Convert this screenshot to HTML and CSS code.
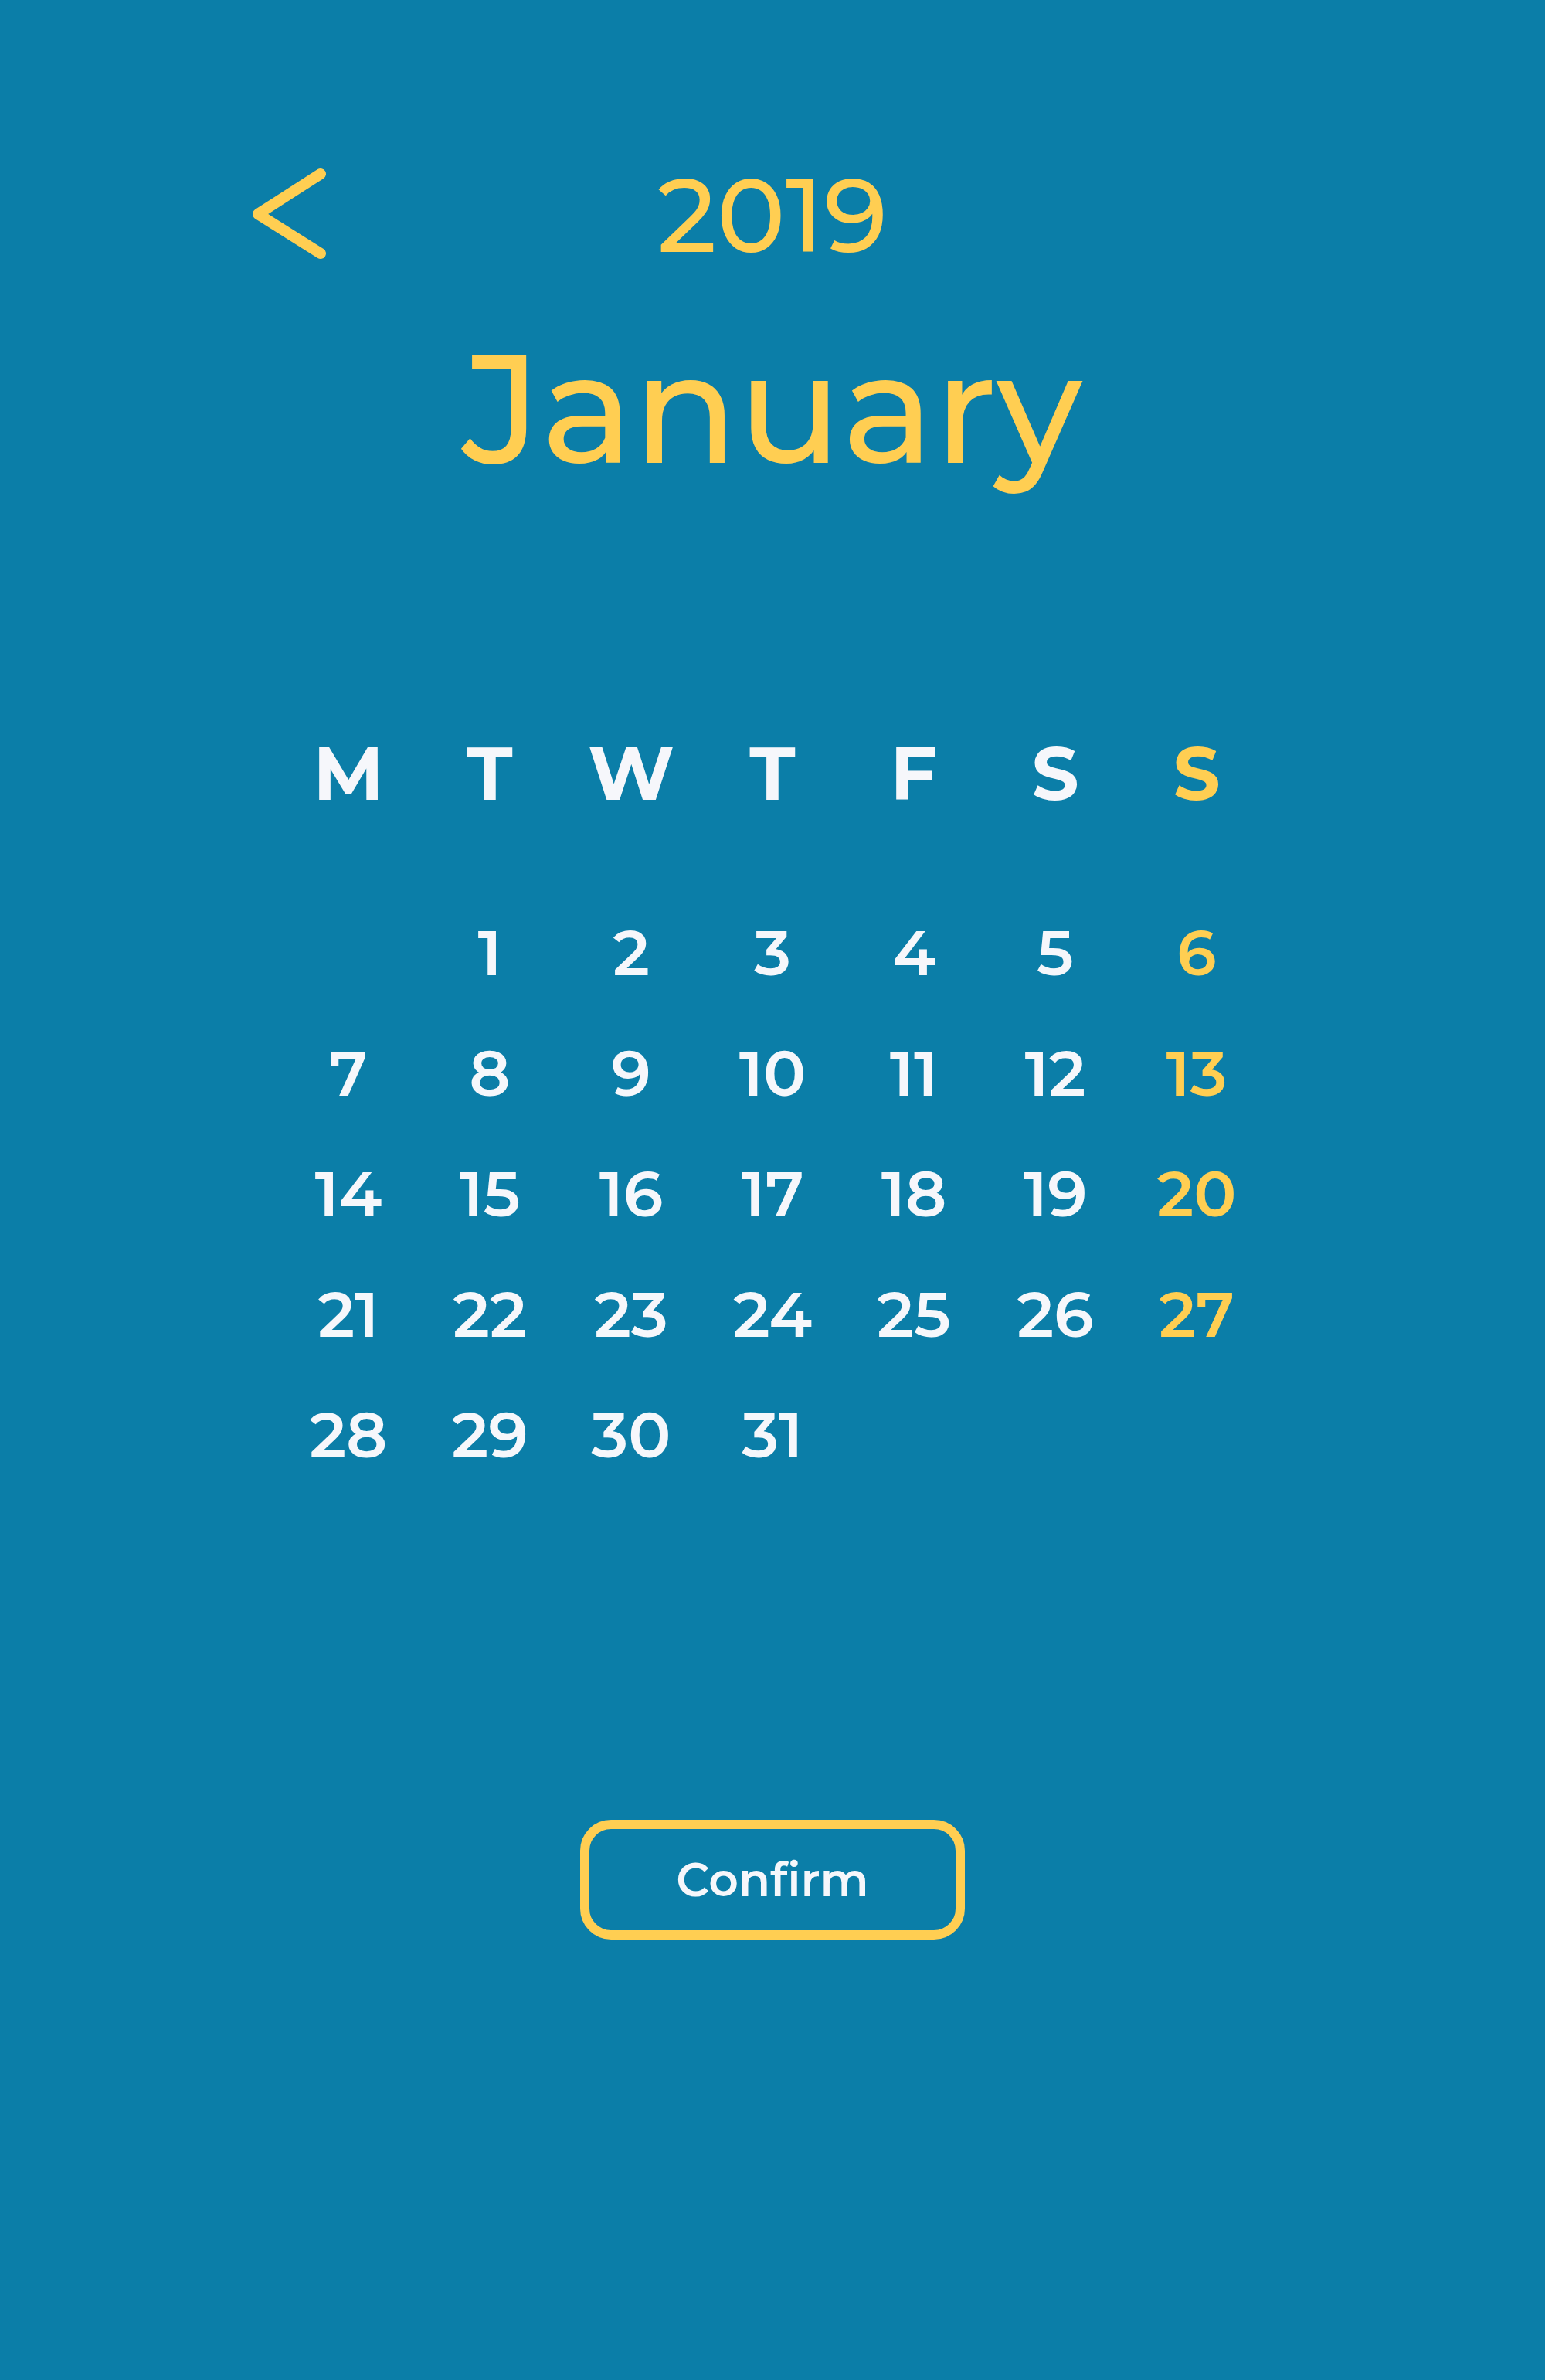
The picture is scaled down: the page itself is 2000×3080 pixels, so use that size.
FILE: index.html
```html
<!DOCTYPE html>
<html lang="en">
<head>
<meta charset="utf-8">
<title>Calendar</title>
<link rel="stylesheet" href="styles.css">
</head>
<body>
<main class="screen">
  <header class="header">
    <div class="back">
      <svg width="105" height="135" viewBox="0 0 105 135" aria-label="Back">
        <polyline points="95,15 14,67 95,118" fill="none" stroke="#FFCE52" stroke-width="14" stroke-linecap="round" stroke-linejoin="round"/>
      </svg>
    </div>
    <div class="year">2019</div>
    <div></div>
  </header>
  <h1 class="month">January</h1>
  <div class="weekdays">
    <span>M</span><span>T</span><span>W</span><span>T</span><span>F</span><span>S</span><span class="sun">S</span>
  </div>
  <div class="days">
    <span></span><span>1</span><span>2</span><span>3</span><span>4</span><span>5</span><span class="sun">6</span>
    <span>7</span><span>8</span><span>9</span><span>10</span><span>11</span><span>12</span><span class="sun">13</span>
    <span>14</span><span>15</span><span>16</span><span>17</span><span>18</span><span>19</span><span class="sun">20</span>
    <span>21</span><span>22</span><span>23</span><span>24</span><span>25</span><span>26</span><span class="sun">27</span>
    <span>28</span><span>29</span><span>30</span><span>31</span>
  </div>
  <div class="actions">
    <button class="confirm" type="button">Confirm</button>
  </div>
</main>
</body>
</html>
```
FILE: styles.css
```css
html, body {
  margin: 0;
  padding: 0;
  background: #0B7EA8;
}
body {
  width: 2000px;
  min-height: 3080px;
  font-family: "Montserrat", Inter, "DejaVu Sans", sans-serif;
  color: #F6F7FB;
}
.screen {
  padding-top: 212px;
}
.header {
  display: grid;
  grid-template-columns: 1fr auto 1fr;
  align-items: start;
  height: 132px;
}
.back {
  margin-left: 320px;
  margin-top: -2px;
  height: 135px;
}
.back svg { display: block; }
.year {
  font-size: 134px;
  line-height: 132px;
  font-weight: 500;
  color: #FFCE52;
}
.month {
  margin: 87px 0 0;
  text-align: center;
  font-size: 199px;
  line-height: 194px;
  font-weight: 500;
  color: #FFCE52;
}
.weekdays, .days {
  width: 1281px;
  margin: 0 auto;
  display: grid;
  grid-template-columns: repeat(7, 183px);
  text-align: center;
}
.weekdays {
  margin-top: 328px;
  font-size: 96px;
  line-height: 96px;
  font-weight: 700;
}
.days {
  margin-top: 144px;
  font-size: 82px;
  line-height: 81px;
  font-weight: 600;
  row-gap: 75px;
}
.sun { color: #FFCE52; }
.actions {
  margin-top: 457px;
  display: flex;
  justify-content: center;
}
.confirm {
  width: 498px;
  height: 155px;
  box-sizing: border-box;
  border: 12px solid #FFCE52;
  border-radius: 40px;
  background: transparent;
  color: #F6F7FB;
  font-family: inherit;
  font-size: 60px;
  font-weight: 600;
  padding: 0;
}
```
